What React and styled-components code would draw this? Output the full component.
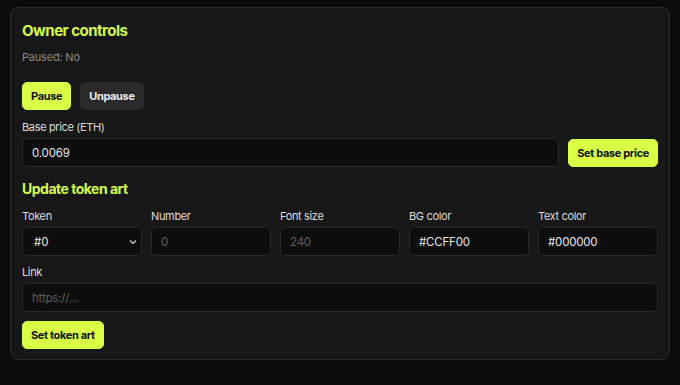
import React from "react";
import styled, { createGlobalStyle } from "styled-components";

const Global = createGlobalStyle`
  html, body { margin: 0; padding: 0; background: #0b0b0b; }
  body { font-family: Inter, "Helvetica Neue", Arial, sans-serif; }
  * { box-sizing: border-box; }
`;

const Page = styled.div`
  padding: 7px 10px 0 10px;
  min-height: 385px;
  background: #0b0b0b;
`;

const Card = styled.section`
  background: #171717;
  border: 1px solid #2b2b2b;
  border-radius: 8px;
  padding: 13px 11px 10px 11px;
  display: flex;
  flex-direction: column;
`;

const Title = styled.h2`
  margin: ${(p) => p.$mt || 0}px 0 0 0;
  font-size: ${(p) => p.$size || 15}px;
  line-height: ${(p) => p.$lh || 20}px;
  font-weight: 700;
  color: #d4fb4a;
  letter-spacing: -0.5px;
`;

const Status = styled.p`
  margin: 8px 0 0 0;
  font-size: 11px;
  line-height: 16px;
  color: #8a8a8a;
  letter-spacing: -0.2px;
`;

const Row = styled.div`
  display: flex;
  gap: 9px;
  margin-top: ${(p) => p.$mt || 0}px;
  align-items: ${(p) => p.$align || "stretch"};
`;

const Button = styled.button`
  height: 28px;
  padding: 0 8px;
  border-radius: 5px;
  border: 1px solid ${(p) => (p.$variant === "ghost" ? "#2c2c2c" : "#d9ff47")};
  background: ${(p) => (p.$variant === "ghost" ? "#2a2a2a" : "#d9ff47")};
  color: ${(p) => (p.$variant === "ghost" ? "#ececec" : "#111")};
  font-family: Inter, Arial, sans-serif;
  font-size: 11px;
  font-weight: 700;
  letter-spacing: -0.35px;
  white-space: nowrap;
  cursor: pointer;
  align-self: ${(p) => p.$self || "auto"};
  flex-shrink: 0;
`;

const Field = styled.label`
  display: flex;
  flex-direction: column;
  flex: ${(p) => (p.$grow ? "1 1 0" : "0 0 auto")};
  min-width: 0;
  margin-top: ${(p) => p.$mt || 0}px;
`;

const Label = styled.span`
  font-size: 11px;
  line-height: 15px;
  color: #dcdcdc;
  letter-spacing: -0.35px;
  margin-bottom: 3px;
`;

const Input = styled.input`
  height: 29px;
  width: 100%;
  background: #0d0d0d;
  border: 1px solid #272727;
  border-radius: 5px;
  padding: 0 9px;
  font-family: Inter, Arial, sans-serif;
  font-size: 11.5px;
  letter-spacing: -0.2px;
  color: #e6e6e6;
  outline: none;
  &::placeholder { color: #5e5e5e; }
`;

const SelectWrap = styled.div`
  position: relative;
  height: 29px;
`;

const Select = styled.select`
  appearance: none;
  -webkit-appearance: none;
  width: 100%;
  height: 29px;
  background: #0d0d0d;
  border: 1px solid #272727;
  border-radius: 5px;
  padding: 0 11px;
  font-family: Inter, Arial, sans-serif;
  font-size: 11.5px;
  color: #e6e6e6;
  outline: none;
`;

const Chevron = styled.svg`
  position: absolute;
  right: 5px;
  top: 12px;
  pointer-events: none;
`;

const Grid = styled.div`
  display: grid;
  grid-template-columns: repeat(5, 1fr);
  gap: 9px;
  margin-top: 11px;
  align-items: end;
`;

export default function App() {
  return (
    <>
      <Global />
      <Page>
        <Card>
          <Title>Owner controls</Title>
          <Status>Paused: No</Status>
          <Row $mt={17}>
            <Button>Pause</Button>
            <Button $variant="ghost">Unpause</Button>
          </Row>
          <Row $mt={10} $align="flex-end">
            <Field $grow>
              <Label>Base price (ETH)</Label>
              <Input defaultValue="0.0069" />
            </Field>
            <Button $self="flex-end">Set base price</Button>
          </Row>
          <Title $mt={13} $size={14} $lh={18}>Update token art</Title>
          <Grid>
            <Field>
              <Label>Token</Label>
              <SelectWrap>
                <Select defaultValue="0">
                  <option value="0">#0</option>
                </Select>
                <Chevron width="8" height="6" viewBox="0 0 8 6">
                  <path d="M1 1.5 L4 4.5 L7 1.5" fill="none" stroke="#cfcfcf" strokeWidth="1.2" />
                </Chevron>
              </SelectWrap>
            </Field>
            <Field>
              <Label>Number</Label>
              <Input placeholder="0" />
            </Field>
            <Field>
              <Label>Font size</Label>
              <Input placeholder="240" />
            </Field>
            <Field>
              <Label>BG color</Label>
              <Input defaultValue="#CCFF00" />
            </Field>
            <Field>
              <Label>Text color</Label>
              <Input defaultValue="#000000" />
            </Field>
          </Grid>
          <Field $mt={9}>
            <Label>Link</Label>
            <Input placeholder="https://..." />
          </Field>
          <Row $mt={9}>
            <Button>Set token art</Button>
          </Row>
        </Card>
      </Page>
    </>
  );
}
